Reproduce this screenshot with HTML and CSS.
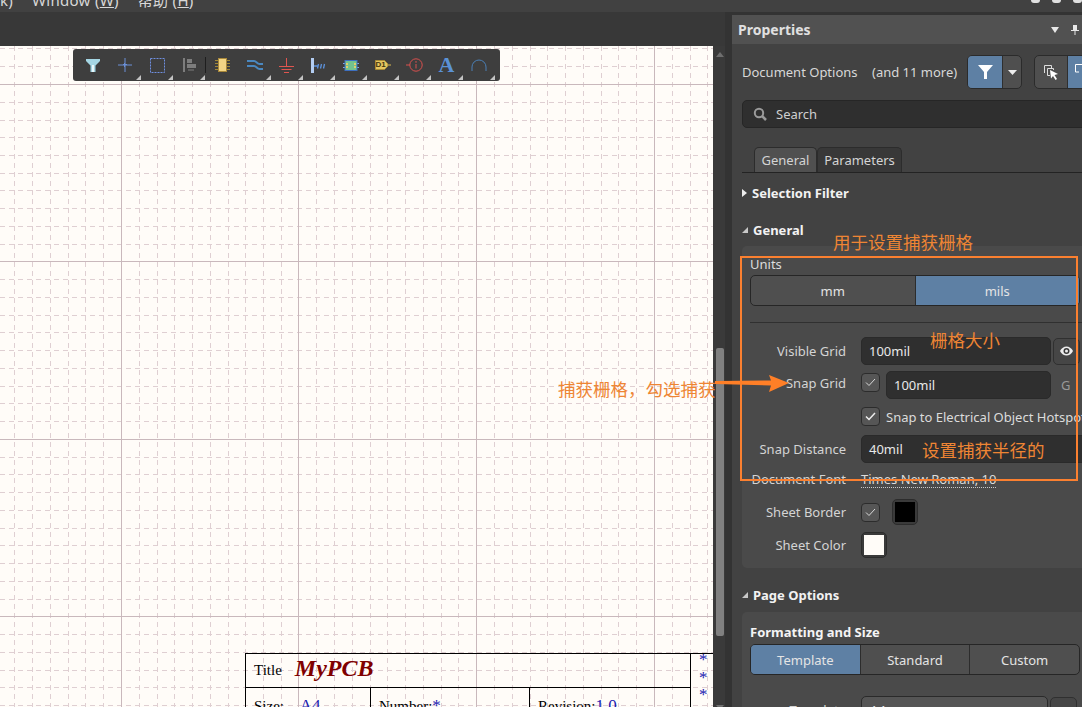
FILE: index.html
```html
<!DOCTYPE html>
<html lang="en">
<head>
    <meta charset="UTF-8">
    <meta name="viewport" content="width=device-width, initial-scale=1.0">
    <title>Properties</title>
    <link rel="stylesheet" href="styles.css">
</head>
<body>
    <div class="menu-bar">
        <div class="menu-items">
            <span class="menu-cut">k)</span>
            <span>Window (<u>W</u>)</span>
            <span>帮助 (<u>H</u>)</span>
        </div>
        <div class="win-icons"><i></i><i></i><i></i></div>
    </div>

    <div class="workspace">
        <div class="doc-area">
            <div class="doc-bar"></div>
            <div class="doc-row">
                <div class="canvas">
                    <svg class="grid" width="713" height="661" viewBox="0 46 713 661">
                        <path class="grid-minor" d="M14.5 46V707M32.5 46V707M50.5 46V707M68.5 46V707M85.5 46V707M103.5 46V707M139.5 46V707M157.5 46V707M174.5 46V707M192.5 46V707M210.5 46V707M228.5 46V707M245.5 46V707M263.5 46V707M281.5 46V707M316.5 46V707M334.5 46V707M352.5 46V707M370.5 46V707M387.5 46V707M405.5 46V707M423.5 46V707M441.5 46V707M458.5 46V707M494.5 46V707M512.5 46V707M530.5 46V707M547.5 46V707M565.5 46V707M583.5 46V707M601.5 46V707M618.5 46V707M636.5 46V707M672.5 46V707M690.5 46V707M707.5 46V707"/>
                        <path class="grid-minor" d="M0 48.5H713M0 66.5H713M0 102.5H713M0 120.5H713M0 137.5H713M0 155.5H713M0 173.5H713M0 190.5H713M0 208.5H713M0 226.5H713M0 244.5H713M0 279.5H713M0 297.5H713M0 315.5H713M0 332.5H713M0 350.5H713M0 368.5H713M0 386.5H713M0 403.5H713M0 421.5H713M0 457.5H713M0 474.5H713M0 492.5H713M0 510.5H713M0 528.5H713M0 545.5H713M0 563.5H713M0 581.5H713M0 599.5H713M0 634.5H713M0 652.5H713M0 670.5H713M0 687.5H713M0 705.5H713"/>
                        <path class="grid-major" d="M121.5 46V707M298.5 46V707M476.5 46V707M654.5 46V707M0 84.5H713M0 261.5H713M0 439.5H713M0 616.5H713"/>
                    </svg>

                    <div class="tools">
                        <button class="tool">
                            <svg width="14" height="13" viewBox="0 0 14 13"><path d="M0 0H14V2L9.500 6.500V13H4.500V6.500L0 2Z" fill="#a5d6e4"/><path d="M6 6H8V13H6Z" fill="#e9f7fb"/></svg>
                        </button>
                        <button class="tool has-menu">
                            <svg width="14" height="14" viewBox="0 0 14 14"><path d="M7 0V14M0 7H14" stroke="#6b8fd6" fill="none"/><path d="M5 6.500H9M6.500 5V9" stroke="#6b8fd6" fill="none"/></svg>
                        </button>
                        <button class="tool has-menu">
                            <svg width="15" height="15" viewBox="0 0 15 15"><rect x="0.500" y="0.500" width="14" height="14" fill="none" stroke="#6f8fe0" stroke-dasharray="2 1"/></svg>
                        </button>
                        <button class="tool has-menu">
                            <svg width="13" height="14" viewBox="0 0 13 14"><path d="M0 0H2V14H0Z" fill="#7d7d7d"/><path d="M4 1H9V5H4ZM4 6H13V10H4Z" fill="#7d7d7d"/><path d="M5 12H11" stroke="#7d7d7d"/></svg>
                        </button>
                        <span class="tool-sep"></span>
                        <button class="tool">
                            <svg width="15" height="14" viewBox="0 0 15 14"><path d="M0 2.500H15M0 5.500H15M0 8.500H15M0 11.500H15" stroke="#a08838"/><rect x="3.500" y="0.500" width="8" height="13" fill="#f3d584" stroke="#a9883a"/></svg>
                        </button>
                        <button class="tool has-menu">
                            <svg width="16" height="10" viewBox="0 0 16 10"><path d="M0 1H7C9.500 1 10 4 12.500 4H16M0 6H7C9.500 6 10 9 12.500 9H16" stroke="#4a88c0" stroke-width="2" fill="none"/></svg>
                        </button>
                        <button class="tool has-menu">
                            <svg width="15" height="15" viewBox="0 0 15 15"><path d="M7.500 0V8M0 8.500H15M2.500 11.500H12.500M5 14.500H10" stroke="#e0554f" fill="none"/></svg>
                        </button>
                        <button class="tool has-menu">
                            <svg width="16" height="15" viewBox="0 0 16 15"><rect x="0" y="0" width="3" height="15" fill="#b3cdf2"/><path d="M3 8H7M6.500 10.500L7.500 6M9.500 10.500L10.500 6M12.500 10.500L13.500 6" stroke="#5d93dc" stroke-width="1.300" fill="none"/></svg>
                        </button>
                        <button class="tool has-menu">
                            <svg width="16" height="11" viewBox="0 0 16 11"><path d="M0 3.500H3M0 7.500H3M13 3.500H16M13 7.500H16" stroke="#7fa8e8"/><rect x="2" y="0.500" width="12" height="10" fill="#72c28f" stroke="#3d6fc0"/><path d="M3 3H5V5H3ZM3 6H5V8H3ZM11 3H13V5H11ZM11 6H13V8H11Z" fill="#e0cf6a"/></svg>
                        </button>
                        <button class="tool has-menu">
                            <svg width="16" height="10" viewBox="0 0 16 10"><path d="M0.500 0.500H9.500L12.500 3.500V6.500L9.500 9.500H0.500Z" fill="#e6c55f" stroke="#a88b36"/><path d="M12 5H16" stroke="#d9b84f"/></svg>
                            <b class="port-name">D1</b>
                        </button>
                        <button class="tool has-menu">
                            <svg width="17" height="14" viewBox="0 0 17 14"><circle cx="10" cy="7" r="6.200" fill="none" stroke="#d8504e"/><path d="M0 7H4M10 6V10.500M10 3V4.800" stroke="#d8504e" fill="none"/></svg>
                        </button>
                        <button class="tool tool-text has-menu">A</button>
                        <button class="tool has-menu">
                            <svg width="16" height="12" viewBox="0 0 16 12"><path d="M1 12V8A7 7 0 0 1 15 8V12" fill="none" stroke="#4a7fb5"/></svg>
                        </button>
                    </div>

                    <div class="title-block">
                        <div class="tb-title"><span class="tb-label">Title</span><span class="tb-name">MyPCB</span></div>
                        <div class="tb-row">
                            <div class="tb-size">Size: <em>A4</em></div>
                            <div class="tb-number">Number:<em>*</em></div>
                            <div class="tb-rev">Revision:<em>1.0</em></div>
                        </div>
                        <div class="tb-stars"><em>*</em><em>*</em><em>*</em></div>
                    </div>
                </div>
                <div class="scrollbar">
                    <span class="scroll-up"></span>
                    <div class="thumb"></div>
                    <span class="scroll-down"></span>
                </div>
            </div>
        </div>

        <div class="panel">
            <div class="panel-head">
                <span>Properties</span>
                <span class="head-icons">
                    <svg width="8" height="6" viewBox="0 0 8 6"><path d="M0 0H8L4 6Z" fill="#e8e8e8"/></svg>
                    <svg width="8" height="10" viewBox="0 0 8 10"><path d="M2 0H6V5H8V6H4.500V10H3.500V6H0V5H2Z" fill="#e8e8e8"/></svg>
                </span>
            </div>

            <div class="panel-body">
                <div class="doc-options">
                    <span class="doc-name">Document Options</span>
                    <span class="more">(and 11 more)</span>
                    <div class="filter-btn">
                        <span class="filter-main"><svg width="15" height="14" viewBox="0 0 15 14"><path d="M0 0H15L9 7V14H6V7Z" fill="#fff"/></svg></span>
                        <span class="filter-drop"><svg width="9" height="5" viewBox="0 0 9 5"><path d="M0 0H9L4.500 5Z" fill="#eee"/></svg></span>
                    </div>
                    <div class="mode-btn">
                        <span class="mode-a"><svg width="16" height="16" viewBox="0 0 16 16"><path d="M1.500 1.500H8.500V4M1.500 1.500V9M4.500 4.500H10.500V6M4.500 4.500V11.500H7" fill="none" stroke="#ddd"/><path d="M7 6L15 10L11.500 11L14 15L12.500 16L10 12L8 14.500Z" fill="#fff"/></svg></span>
                        <span class="mode-b"><svg width="12" height="14" viewBox="0 0 12 14"><path d="M0.500 0.500H9M0.500 0.500V8H4" fill="none" stroke="#fff"/></svg></span>
                    </div>
                </div>

                <div class="search">
                    <svg width="14" height="14" viewBox="0 0 14 14"><circle cx="6" cy="6" r="4.200" fill="none" stroke="#9a9a9a" stroke-width="2"/><path d="M9 9L13 13" stroke="#9a9a9a" stroke-width="2.500"/></svg>
                    <span>Search</span>
                </div>

                <div class="tabs">
                    <div class="tab tab-active">General</div>
                    <div class="tab tab-params">Parameters</div>
                </div>

                <div class="section-title section-filter"><span class="arrow-right"></span>Selection Filter</div>
                <div class="section-title section-general"><span class="arrow-down"></span>General</div>

                <div class="card card-general">
                    <div class="units-label">Units</div>
                    <div class="segmented seg-units">
                        <div class="seg">mm</div>
                        <div class="seg seg-on">mils</div>
                    </div>
                    <div class="divider"></div>

                    <div class="form-row row-visible">
                        <label>Visible Grid</label>
                        <div class="field field-visible">100mil</div>
                        <div class="eye-btn">
                            <svg width="13" height="10" viewBox="0 0 13 10"><path d="M0 5C3 -1 10 -1 13 5C10 11 3 11 0 5Z" fill="#eee"/><circle cx="6.500" cy="5" r="3" fill="#3a3a3a"/><circle cx="6.500" cy="5" r="1.500" fill="#eee"/></svg>
                        </div>
                    </div>
                    <div class="form-row row-snap">
                        <label>Snap Grid</label>
                        <div class="check"><svg width="11" height="9" viewBox="0 0 11 9"><path d="M1 4.500L4 7.500L10 1" fill="none" stroke="#d8d8d8"/></svg></div>
                        <div class="field field-snap">100mil</div>
                        <span class="shortcut">G</span>
                    </div>
                    <div class="form-row row-hotspot">
                        <label></label>
                        <div class="check"><svg width="11" height="9" viewBox="0 0 11 9"><path d="M1 4.500L4 7.500L10 1" fill="none" stroke="#eee" stroke-width="1.500"/></svg></div>
                        <span class="nowrap">Snap to Electrical Object Hotspots</span>
                    </div>
                    <div class="form-row row-distance">
                        <label>Snap Distance</label>
                        <div class="field field-distance">40mil</div>
                    </div>
                    <div class="form-row row-font">
                        <label>Document Font</label>
                        <span class="font-link">Times New Roman, 10</span>
                    </div>
                    <div class="form-row row-border">
                        <label>Sheet Border</label>
                        <div class="check"><svg width="11" height="9" viewBox="0 0 11 9"><path d="M1 4.500L4 7.500L10 1" fill="none" stroke="#d8d8d8"/></svg></div>
                        <div class="swatch swatch-black"><i></i></div>
                    </div>
                    <div class="form-row row-color">
                        <label>Sheet Color</label>
                        <div class="swatch swatch-white"><i></i></div>
                    </div>
                </div>

                <div class="section-title section-page"><span class="arrow-down"></span>Page Options</div>

                <div class="card card-page">
                    <div class="card-heading">Formatting and Size</div>
                    <div class="segmented seg-format">
                        <div class="seg seg-on">Template</div>
                        <div class="seg">Standard</div>
                        <div class="seg">Custom</div>
                    </div>
                    <div class="form-row row-template">
                        <label>Template</label>
                        <div class="field field-select">A4</div>
                        <div class="eye-btn"></div>
                    </div>
                </div>
            </div>
        </div>
    </div>

    <!-- annotations drawn over the screenshot -->
    <div class="note-box"></div>
    <div class="note note-a">用于设置捕获栅格</div>
    <div class="note note-b">栅格大小</div>
    <div class="note note-c">捕获栅格，勾选捕获</div>
    <div class="note note-d">设置捕获半径的</div>
    <svg class="note-arrow" width="76" height="20" viewBox="0 0 76 20"><path d="M0 7L56 6.500L54 1L74 9L54 18L56 11.500L0 10Z" fill="#ff7f27"/></svg>
</body>
</html>
```

FILE: styles.css
```css
* {
    box-sizing: border-box;
}

html, body {
    height: 100%;
}

body {
    position: relative;
    width: 1082px;
    height: 707px;
    margin: 0;
    overflow: hidden;
    background-color: #333333;
    color: #dcdcdc;
    font-family: "Noto Sans", "Noto Sans CJK SC", sans-serif;
    font-size: 13px;
}

/* top bar */
.menu-bar {
    display: flex;
    justify-content: space-between;
    height: 12px;
    background-color: #414141;
    overflow: hidden;
}

.menu-items {
    display: flex;
    gap: 19px;
    margin-top: -9px;
    font-size: 15px;
    line-height: 19px;
    letter-spacing: 0.3px;
    color: #d8d8d8;
}

.menu-cut {
    width: 13px;
}

.win-icons {
    display: flex;
    gap: 12px;
    padding-right: 0;
}

.win-icons i {
    display: block;
    width: 9px;
    height: 3px;
    border-radius: 0 0 3px 3px;
    background-color: #e0e0e0;
}

.workspace {
    display: flex;
    height: 695px;
}

.doc-area {
    width: 725px;
    margin-right: 7px;
}

.doc-bar {
    height: 34px;
    background-color: #383838;
}

.doc-row {
    display: flex;
    height: 661px;
}

/* schematic sheet */
.canvas {
    position: relative;
    width: 713px;
    height: 661px;
    background-color: #fffcf8;
    overflow: hidden;
}

.grid {
    position: absolute;
    left: 0;
    top: 0;
}

.grid-minor {
    fill: none;
    stroke: #dfcfd2;
    stroke-dasharray: 5 4;
}

.grid-major {
    fill: none;
    stroke: #c9b8bc;
}

.scrollbar {
    width: 12px;
    padding-top: 6px;
    background-color: #3a3a3a;
}

.scroll-up, .scroll-down {
    display: block;
    width: 0;
    height: 0;
    margin-left: 3px;
    border-left: 4px solid transparent;
    border-right: 4px solid transparent;
}

.scroll-up {
    border-bottom: 5px solid #6e6e6e;
}

.scroll-down {
    margin-top: 69px;
    border-top: 5px solid #6e6e6e;
}

.thumb {
    width: 8px;
    height: 288px;
    margin: 291px 0 0 3px;
    border-radius: 2px;
    background-color: #808080;
}

/* floating toolbar */
.tools {
    position: absolute;
    left: 73px;
    top: 3px;
    display: flex;
    align-items: center;
    width: 427px;
    height: 32px;
    padding-left: 4px;
    border-radius: 3px;
    background-color: #3e3e3e;
}

.tool {
    position: relative;
    display: flex;
    align-items: center;
    justify-content: center;
    width: 32px;
    height: 32px;
    padding: 0;
    border: none;
    background: none;
    color: #5b92d6;
}

.has-menu::after {
    content: "";
    position: absolute;
    right: 0;
    bottom: 1px;
    border-left: 5px solid transparent;
    border-bottom: 5px solid #c4c4c4;
}

.tool-sep {
    width: 1px;
    height: 16px;
    margin-right: 0.5px;
    background-color: #1e1e1e;
}

.tool-text {
    font-family: "Liberation Serif", serif;
    font-size: 22px;
    font-weight: bold;
}

.port-name {
    position: absolute;
    left: 9px;
    top: 0;
    font-family: "Liberation Sans", sans-serif;
    font-size: 8px;
    line-height: 32px;
    color: #43360f;
}

/* title block */
.title-block {
    position: absolute;
    left: 245px;
    top: 607px;
    width: 468px;
    height: 60px;
    border-top: 1px solid #000000;
    border-left: 1px solid #000000;
    font-family: "Liberation Serif", serif;
    font-size: 15px;
    color: #000000;
}

.title-block em {
    font-style: normal;
    font-size: 17px;
    color: #1a1ab0;
}

.tb-title {
    display: flex;
    align-items: center;
    gap: 13px;
    width: 445px;
    height: 34px;
    padding-left: 8px;
    border-bottom: 1px solid #000000;
    border-right: 1px solid #000000;
}

.tb-name {
    margin-top: -5px;
    font-size: 24px;
    font-weight: bold;
    font-style: italic;
    color: #800000;
}

.tb-row {
    display: grid;
    grid-template-columns: 125px 159px 160px;
    width: 445px;
    height: 30px;
    border-right: 1px solid #000000;
}

.tb-row > div {
    padding: 9px 0 0 8px;
    border-right: 1px solid #000000;
    line-height: 17px;
    white-space: nowrap;
}

.tb-row > div:last-child {
    border-right: none;
}

.tb-size em {
    margin-left: 12px;
}

.tb-stars {
    position: absolute;
    left: 453px;
    top: -3px;
    display: flex;
    flex-direction: column;
    line-height: 17.500px;
}

/* properties panel */
.panel {
    width: 350px;
    margin-top: 3px;
    background-color: #424242;
    overflow: hidden;
}

.panel-head {
    display: flex;
    align-items: center;
    justify-content: space-between;
    height: 29px;
    padding: 0 3px 0 6px;
    background-color: #515151;
    color: #e0e0e0;
    font-size: 14px;
    font-weight: bold;
}

.head-icons {
    display: flex;
    align-items: center;
    gap: 12px;
}

.panel-body {
    width: 370px;
    padding-left: 10px;
}

.doc-options {
    display: flex;
    align-items: center;
    height: 34px;
    margin-top: 11px;
    color: #d8d8d8;
}

.doc-name {
    width: 117px;
    white-space: nowrap;
}

.more {
    width: 87px;
    margin-left: 13px;
    white-space: nowrap;
}

.filter-btn, .mode-btn {
    display: flex;
    height: 34px;
    border: 1px solid #2b2b2b;
    border-radius: 5px;
    overflow: hidden;
    background-color: #4f4f4f;
}

.filter-btn {
    margin-left: 8px;
}

.mode-btn {
    width: 60px;
    margin-left: 12px;
}

.filter-main {
    display: flex;
    align-items: center;
    justify-content: center;
    width: 35px;
    background-color: #5e80a4;
    border-right: 1px solid #2f2f2f;
}

.filter-drop {
    display: flex;
    align-items: center;
    justify-content: center;
    width: 18px;
}

.mode-a {
    display: flex;
    align-items: center;
    justify-content: center;
    width: 33px;
    border-right: 1px solid #2f2f2f;
}

.mode-b {
    flex: 1;
    padding: 8px 0 0 7px;
    background-color: #5e80a4;
}

.search {
    display: flex;
    align-items: center;
    gap: 9px;
    height: 28px;
    margin-top: 11px;
    padding-left: 10px;
    border: 1px solid #262626;
    border-radius: 5px;
    background-color: #2f2f2f;
    color: #cfcfcf;
}

.tabs {
    display: flex;
    height: 26px;
    margin-top: 19px;
    padding-left: 12px;
    border-bottom: 1px solid #232323;
}

.tab {
    width: 63px;
    padding-top: 3px;
    border: 1px solid #2c2c2c;
    border-bottom: none;
    border-radius: 5px 5px 0 0;
    background-color: #383838;
    color: #d4d4d4;
    text-align: center;
}

.tab-params {
    width: 85px;
}

.tab-active {
    background-color: #505050;
}

.section-title {
    display: flex;
    align-items: center;
    gap: 5px;
    color: #f2f2f2;
    font-weight: bold;
    line-height: 18px;
}

.section-filter {
    margin-top: 11px;
}

.section-general {
    margin-top: 19px;
}

.section-page {
    margin-top: 18px;
}

.arrow-right {
    width: 0;
    height: 0;
    border-left: 5px solid #eeeeee;
    border-top: 4px solid transparent;
    border-bottom: 4px solid transparent;
}

.arrow-down {
    width: 0;
    height: 0;
    border-left: 6px solid transparent;
    border-bottom: 6px solid #c8c8c8;
}

.card {
    border-radius: 5px;
    background-color: #4a4a4a;
    padding-left: 8px;
}

.card-general {
    height: 322px;
    margin-top: 7px;
    padding-top: 9px;
}

.units-label {
    line-height: 18px;
}

.segmented {
    display: flex;
    width: 330px;
    height: 31px;
    border: 1px solid #262626;
    border-radius: 5px;
    overflow: hidden;
    background-color: #4f4f4f;
}

.seg {
    display: flex;
    align-items: center;
    justify-content: center;
    flex: 1;
    border-right: 1px solid #2c2c2c;
    color: #e4e4e4;
}

.seg:last-child {
    border-right: none;
}

.seg-on {
    background-color: #5e80a4;
}

.seg-units {
    margin-top: 2px;
}

.divider {
    height: 1px;
    margin-top: 16px;
    background-color: #303030;
}

.form-row {
    display: flex;
    align-items: center;
}

.form-row label {
    flex: none;
    width: 96px;
    margin-right: 15px;
    text-align: right;
    color: #d4d4d4;
    white-space: nowrap;
}

.field {
    display: flex;
    align-items: center;
    height: 28px;
    padding-left: 7px;
    border: 1px solid #2a2a2a;
    border-radius: 5px;
    background-color: #2f2f2f;
    color: #e8e8e8;
}

.field-visible {
    width: 190px;
}

.field-snap {
    width: 165px;
    margin-left: 6px;
}

.field-distance {
    width: 240px;
}

.field-select {
    width: 187px;
    padding-left: 8px;
    background-color: #555555;
}

.eye-btn {
    display: flex;
    align-items: center;
    justify-content: center;
    width: 27px;
    height: 27px;
    margin-left: 2px;
    border: 1px solid #303030;
    border-radius: 5px;
    background-color: #464646;
}

.check {
    display: flex;
    align-items: center;
    justify-content: center;
    width: 19px;
    height: 19px;
    border: 1px solid #2c2c2c;
    border-radius: 4px;
    background-color: #565656;
}

.shortcut {
    margin-left: 10px;
    color: #999999;
}

.nowrap {
    margin-left: 6px;
    white-space: nowrap;
}

.row-visible {
    height: 28px;
    margin-top: 14px;
}

.row-snap {
    height: 28px;
    margin-top: 6px;
}

.row-snap label {
    margin-bottom: 5px;
}

.row-snap .check {
    margin-bottom: 5px;
}

.row-hotspot {
    height: 19px;
    margin-top: 8px;
}

.row-distance {
    height: 28px;
    margin-top: 9px;
}

.row-font {
    height: 18px;
    margin-top: 7px;
}

.font-link {
    border-bottom: 1px dotted #c8c8c8;
    line-height: 16px;
    white-space: nowrap;
}

.row-border {
    height: 26px;
    margin-top: 11px;
}

.row-color {
    height: 27px;
    margin-top: 6px;
}

.swatch {
    display: flex;
    align-items: center;
    justify-content: center;
    width: 26px;
    height: 26px;
    border: 1px solid #2c2c2c;
    border-radius: 5px;
    background-color: #3a3a3a;
}

.swatch i {
    display: block;
    width: 20px;
    height: 20px;
}

.swatch-black {
    margin-left: 12px;
}

.swatch-black i {
    background-color: #000000;
}

.swatch-white i {
    background-color: #fffcf8;
}

.card-page {
    height: 100px;
    margin-top: 8px;
    padding-top: 11px;
}

.card-heading {
    color: #f4f4f4;
    font-weight: bold;
    line-height: 18px;
}

.seg-format {
    margin-top: 3px;
}

.row-template {
    height: 28px;
    margin-top: 21px;
}

/* orange notes over the shot */
.note {
    position: absolute;
    color: #ee8534;
    font-family: "Noto Sans CJK SC", sans-serif;
    font-size: 17.500px;
    line-height: 24px;
    white-space: nowrap;
}

.note-a {
    left: 833px;
    top: 230px;
}

.note-b {
    left: 930px;
    top: 328px;
}

.note-c {
    left: 558px;
    top: 377px;
}

.note-d {
    left: 922px;
    top: 438px;
}

.note-box {
    position: absolute;
    left: 740px;
    top: 256px;
    width: 338px;
    height: 225px;
    border: 2px solid #fb8030;
}

.note-arrow {
    position: absolute;
    left: 715px;
    top: 374px;
}
```
